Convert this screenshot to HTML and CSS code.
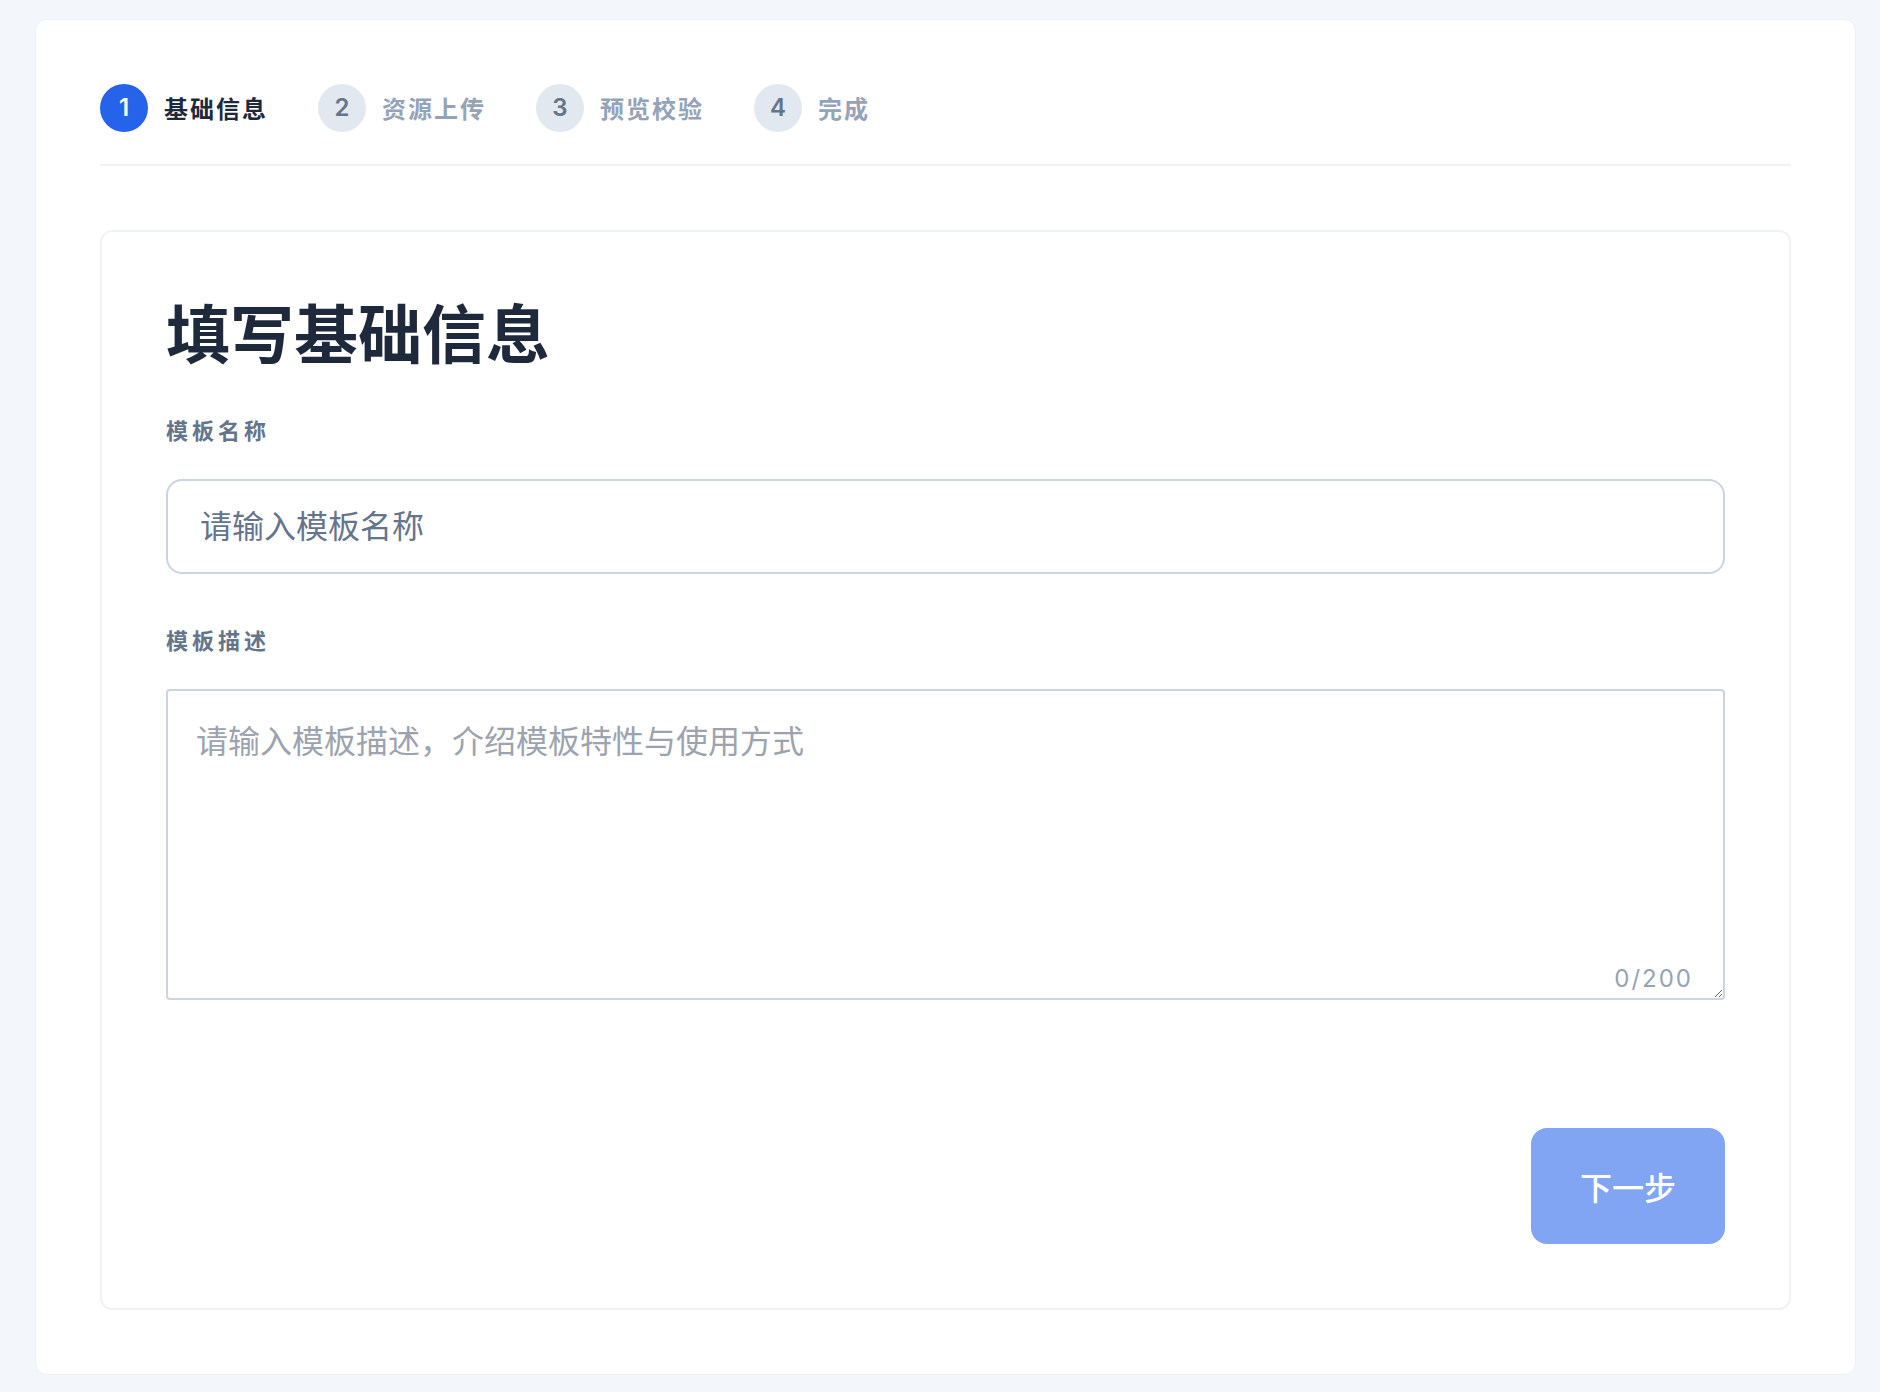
FILE: index.html
```html
<!DOCTYPE html>
<html lang="zh-CN">
<head>
<meta charset="utf-8">
<title>填写基础信息</title>
<link rel="stylesheet" href="styles.css">
</head>
<body>
  <main class="shell">
    <nav class="steps">
      <div class="step active"><span class="num">1</span><span class="step-label">基础信息</span></div>
      <div class="step"><span class="num">2</span><span class="step-label">资源上传</span></div>
      <div class="step"><span class="num">3</span><span class="step-label">预览校验</span></div>
      <div class="step"><span class="num">4</span><span class="step-label">完成</span></div>
    </nav>

    <section class="form-card">
      <h1 class="title">填写基础信息</h1>

      <label class="field-label" for="name">模板名称</label>
      <input id="name" class="text-input" type="text" placeholder="请输入模板名称">

      <label class="field-label" for="desc">模板描述</label>
      <div class="area-wrap">
        <textarea id="desc" class="text-area" placeholder="请输入模板描述，介绍模板特性与使用方式"></textarea>
        <span class="counter">0/200</span>
      </div>

      <div class="actions">
        <button class="next-btn" type="button">下一步</button>
      </div>
    </section>
  </main>
</body>
</html>
```

FILE: styles.css
```css
* {
  box-sizing: border-box;
}

html, body {
  margin: 0;
  background: #f3f6fa;
}

body {
  padding: 19px 24px 18px 35px;
  font-family: "Inter", "Noto Sans CJK SC", sans-serif;
  color: #1e293b;
}

.shell {
  background: #ffffff;
  border: 1px solid #eef0f3;
  border-radius: 12px;
  padding: 64px;
}

/* ---------- steps ---------- */
.steps {
  display: flex;
  align-items: center;
  gap: 50px;
  padding-bottom: 32px;
  border-bottom: 2px solid #f1f2f4;
}

.step {
  display: flex;
  align-items: center;
  gap: 16px;
}

.num {
  width: 48px;
  height: 48px;
  border-radius: 50%;
  display: flex;
  align-items: center;
  justify-content: center;
  background: #e2e8f0;
  color: #64748b;
  font-size: 24px;
  font-weight: 600;
  line-height: 1;
}

.step-label {
  font-family: "Noto Sans CJK SC", sans-serif;
  font-size: 24px;
  font-weight: 600;
  letter-spacing: 2px;
  color: #94a3b8;
  line-height: 32px;
}

.step.active .num {
  background: #2563eb;
  color: #ffffff;
}

.step.active .step-label {
  color: #1e293b;
}

/* ---------- form card ---------- */
.form-card {
  margin-top: 64px;
  border: 2px solid #f1f2f4;
  border-radius: 12px;
  padding: 64px;
  display: flex;
  flex-direction: column;
}

.title {
  margin: 0;
  font-family: "Noto Sans CJK SC", sans-serif;
  font-size: 64px;
  font-weight: 700;
  line-height: 68px;
  color: #1e293b;
}

.field-label {
  display: block;
  margin-top: 49px;
  margin-bottom: 33px;
  font-family: "Noto Sans CJK SC", sans-serif;
  font-size: 22px;
  font-weight: 600;
  letter-spacing: 4px;
  line-height: 33px;
  color: #64748b;
}

.text-input {
  display: block;
  width: 100%;
  height: 95px;
  border: 2px solid #cbd5e1;
  border-radius: 16px;
  padding: 0 32px;
  font-family: "Inter", "Noto Sans CJK SC", sans-serif;
  font-size: 32px;
  color: #1e293b;
  background: #ffffff;
  outline: none;
}

.text-input::placeholder {
  color: #64748b;
}

.area-wrap {
  position: relative;
}

.text-area {
  display: block;
  width: 100%;
  height: 311px;
  border: 2px solid #cbd5e1;
  border-radius: 4px;
  padding: 27px 28px 24px;
  font-family: "Inter", "Noto Sans CJK SC", sans-serif;
  font-size: 32px;
  line-height: 48px;
  color: #1e293b;
  background: #ffffff;
  outline: none;
}

.text-area::placeholder {
  color: #9ca3af;
}

.counter {
  position: absolute;
  right: 32px;
  bottom: 6px;
  font-size: 24px;
  line-height: 30px;
  letter-spacing: 2px;
  color: #94a3b8;
}

.actions {
  display: flex;
  justify-content: flex-end;
  margin-top: 128px;
}

.next-btn {
  width: 194px;
  height: 116px;
  border: none;
  border-radius: 16px;
  background: #81a4f3;
  color: #ffffff;
  font-family: "Noto Sans CJK SC", sans-serif;
  font-size: 32px;
  font-weight: 500;
  cursor: not-allowed;
}
```
